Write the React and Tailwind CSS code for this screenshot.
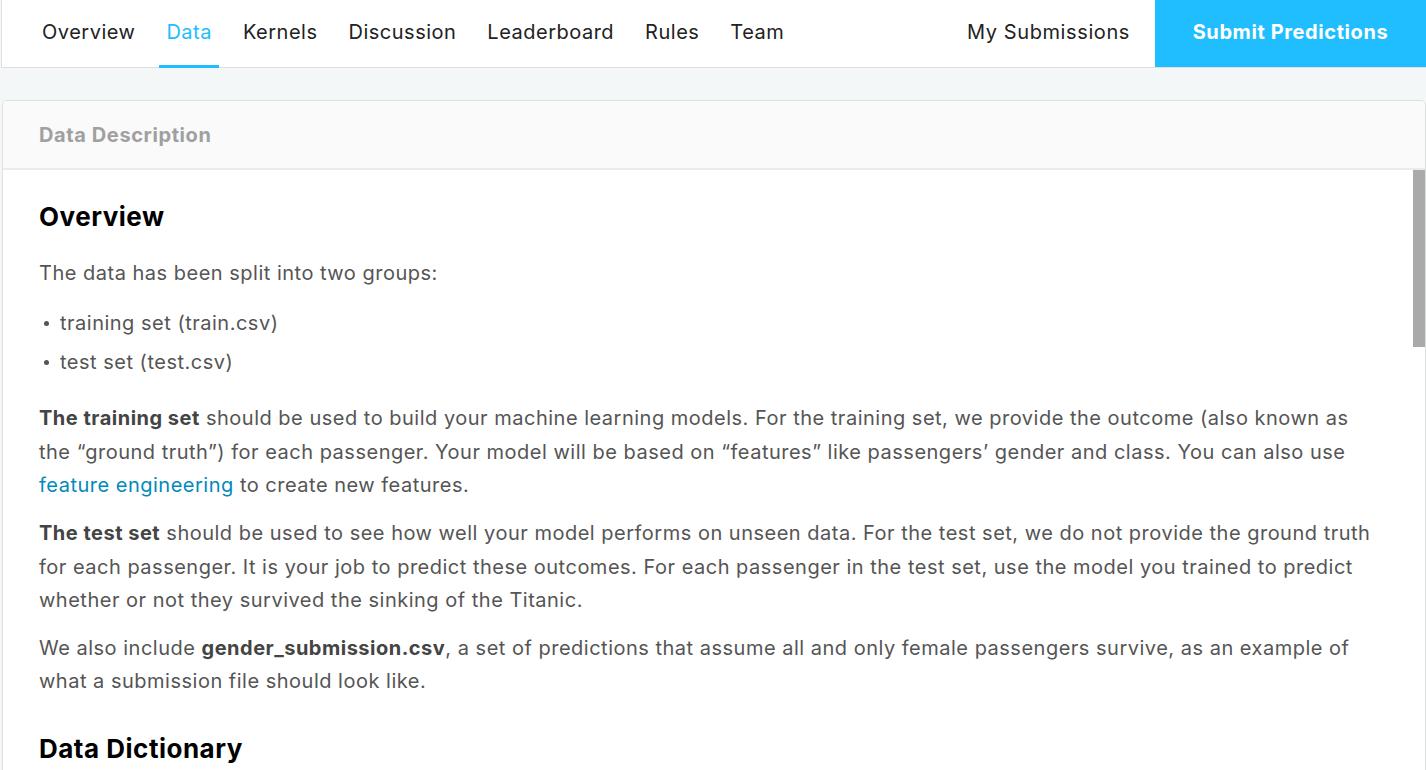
import React from "react";

const tabs = ["Overview", "Data", "Kernels", "Discussion", "Leaderboard", "Rules", "Team"];

const Bullet = ({ children }) => (
  <li className="flex items-center leading-[33.5px]">
    <span className="ml-[5px] mr-[11px] h-[5px] w-[5px] rounded-full bg-[#555]" />
    {children}
  </li>
);

export default function App() {
  return (
    <div
      className="h-[770px] overflow-hidden bg-[#f4f7f8] pl-[1px] text-[#555]"
      style={{ fontFamily: "Inter, 'Noto Sans', sans-serif" }}
    >
      {/* Top tabs */}
      <div className="flex h-[68px] items-stretch border-b border-l border-[#dedfe0] bg-white">
        <nav className="flex items-stretch gap-[17px] pl-[33px]">
          {tabs.map((t) => (
            <a
              key={t}
              className={`relative flex items-center px-[7px] pb-[3px] text-[20px] tracking-[0.5px] ${
                t === "Data" ? "text-[#20beff]" : "text-[#222]"
              }`}
            >
              {t}
              {t === "Data" && (
                <span className="absolute bottom-[-1px] left-0 right-0 h-[3px] bg-[#20beff]" />
              )}
            </a>
          ))}
        </nav>
        <div className="ml-auto flex items-stretch">
          <a className="flex items-center pb-[3px] pr-[25px] text-[20px] tracking-[0.6px] text-[#222]">
            My Submissions
          </a>
          <button className="flex w-[271px] items-center justify-center bg-[#20beff] pb-[3px] text-[20px] font-bold tracking-[0.6px] text-white">
            Submit Predictions
          </button>
        </div>
      </div>

      {/* Panel */}
      <div className="mt-[32px] ml-[1px] flex h-[700px] flex-col overflow-hidden rounded-t-[5px] border border-[#dedfe0] bg-white">
        <div className="flex h-[69px] items-center border-b-2 border-[#ebebeb] bg-[#fafafa] px-[36px]">
          <h2 className="text-[20px] font-bold tracking-[0.6px] text-[#a0a0a0]">Data Description</h2>
        </div>
        <div className="flex flex-1 overflow-hidden">
          <div className="flex-1 pl-[36px] pr-[40px] pt-[31px] text-[20px] tracking-[0.5px]">
            <h1 className="text-[26px] font-bold leading-[32px] text-black">Overview</h1>
            <p className="mt-[24px] leading-[33.5px]">The data has been split into two groups:</p>
            <ul className="mt-[16.5px] flex flex-col gap-[5px]">
              <Bullet>training set (train.csv)</Bullet>
              <Bullet>test set (test.csv)</Bullet>
            </ul>
            <p className="mt-[23px] leading-[33.5px]">
              <b className="text-[#444]">The training set</b> should be used to build your machine learning models. For the
              training set, we provide the outcome (also known as the “ground truth”) for each passenger. Your model will be
              based on “features” like passengers’ gender and class. You can also use{" "}
              <a className="text-[#008abc]">feature engineering</a> to create new features.
            </p>
            <p className="mt-[14.5px] leading-[33.5px]">
              <b className="text-[#444]">The test set</b> should be used to see how well your model performs on unseen data.
              For the test set, we do not provide the ground truth for each passenger. It is your job to predict these
              outcomes. For each passenger in the test set, use the model you trained to predict whether or not they survived
              the sinking of the Titanic.
            </p>
            <p className="mt-[14px] leading-[33.5px]">
              We also include <b className="text-[#444]">gender_submission.csv</b>, a set of predictions that assume all and
              only female passengers survive, as an example of what a submission file should look like.
            </p>
            <h1 className="mt-[34px] text-[26px] font-bold leading-[32px] text-black">Data Dictionary</h1>
          </div>
          {/* scrollbar */}
          <div className="w-[12px]">
            <div className="h-[177px] bg-[#aaa]" />
          </div>
        </div>
      </div>
    </div>
  );
}
